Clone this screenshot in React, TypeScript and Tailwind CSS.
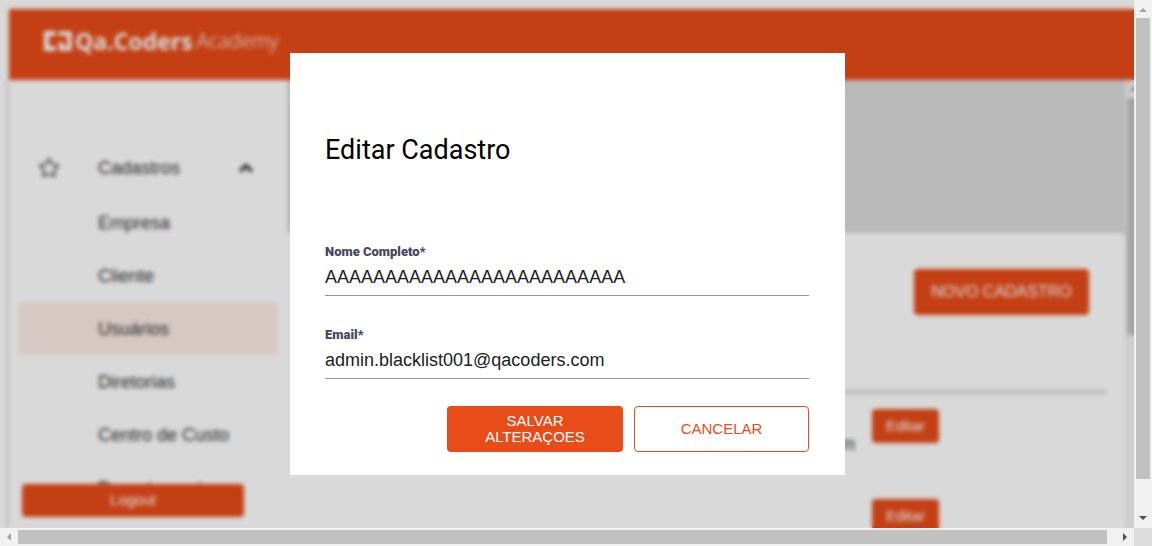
import { ChevronUp, Star } from "lucide-react";

const menuItems = ["Empresa", "Cliente", "Usuários", "Diretorias", "Centro de Custo", "Departamentos"];

const userEmails = ["admin.blacklist001@qacoders.com"];

function Arrow({ points, className }: { points: string; className: string }) {
  return (
    <svg viewBox="0 0 18 18" className={`size-[18px] shrink-0 ${className}`} aria-hidden="true">
      <polygon points={points} fill="currentColor" />
    </svg>
  );
}

function Logo() {
  return (
    <div className="flex items-center text-white">
      <svg viewBox="0 0 30 20" className="mr-0.5 h-5 w-[30px]" fill="none" stroke="currentColor" aria-hidden="true">
        <path d="M12.500 2.500H3.500V17.500H12.500" strokeWidth="5" />
        <path d="M15.500 2.500H26.500V17.500H18V11" strokeWidth="4.500" />
      </svg>
      <span className="font-['Open_Sans'] text-[23px] leading-6 font-bold">Qa.Coders</span>
      <span className="ml-1 font-['Open_Sans'] text-xl leading-6 font-light">Academy</span>
    </div>
  );
}

function Sidebar() {
  return (
    <aside className="relative flex w-[278px] shrink-0 flex-col overflow-hidden bg-white px-[9px] pt-[61px] shadow-[0_0_5px_rgba(0,0,0,0.35)]">
      <button className="flex h-[55px] shrink-0 items-center pb-0.5 pl-5 text-left text-lg text-[#333]">
        <Star className="mr-[38px] size-[22px] text-[#555]" strokeWidth={2} />
        <span className="flex-1">Cadastros</span>
        <ChevronUp className="mr-[22px] size-5" strokeWidth={4} />
      </button>
      <nav className="flex flex-col">
        {menuItems.map((item) => (
          <a
            key={item}
            href="#"
            className={`flex h-[53px] shrink-0 items-center rounded pl-20 text-lg text-[#333] ${item === "Usuários" ? "bg-[#fdebe6]" : ""}`}
          >
            {item}
          </a>
        ))}
      </nav>
      <button className="absolute bottom-[11px] left-[13px] h-[33px] w-[222px] rounded bg-[#e74b18] text-[15px] text-white">
        Logout
      </button>
    </aside>
  );
}

function Content() {
  return (
    <main className="relative flex min-w-0 flex-1 flex-col overflow-hidden bg-[#dadada] pt-[153px]">
      <section className="flex-1 rounded-tr-md bg-white px-[18px] pt-9">
        <div className="flex justify-end pr-[18px]">
          <button className="h-[46px] w-[175px] rounded bg-[#e74b18] text-base text-white">
            NOVO CADASTRO
          </button>
        </div>
        <table className="mt-[76px] w-full border-t-2 border-[#bbb] text-lg text-[#333]">
          <tbody>
            {[...userEmails, ""].map((email, index) => (
              <tr key={index} className="h-[91px] align-top">
                <td className="pt-[37px] pr-[17px] text-right">{email}</td>
                <td className="w-[235px] pt-4">
                  <button className="h-[34px] w-[67px] rounded bg-[#e74b18] text-[15px] text-white">Editar</button>
                </td>
              </tr>
            ))}
          </tbody>
        </table>
      </section>
    </main>
  );
}

function InnerScrollbar() {
  return (
    <div className="flex w-[18px] shrink-0 flex-col items-center bg-[#f1f1f1]">
      <Arrow points="9,6 14,11 4,11" className="text-[#a3a3a3]" />
      <div className="h-[237px] w-[14px] bg-[#c1c1c1]" />
    </div>
  );
}

function Field({ id, label, type, value }: { id: string; label: string; type: string; value: string }) {
  return (
    <div className="flex flex-col">
      <label htmlFor={id} className="font-[Roboto] text-[13px] leading-4 font-black text-[#454860]">
        {label}
      </label>
      <input
        id={id}
        type={type}
        defaultValue={value}
        className="h-9 w-full border-b border-[#949494] text-lg leading-5 text-[#212121] outline-none"
      />
    </div>
  );
}

function EditDialog() {
  return (
    <form
      role="dialog"
      aria-labelledby="dialog-title"
      className="w-[555px] bg-white pt-20 pr-9 pb-[23px] pl-[35px]"
      onSubmit={(event) => event.preventDefault()}
    >
      <h1 id="dialog-title" className="font-[Roboto] text-[27px] leading-[34px] text-black">
        Editar Cadastro
      </h1>
      <div className="mt-[77px] flex flex-col gap-[31px]">
        <Field id="name" label="Nome Completo*" type="text" value="AAAAAAAAAAAAAAAAAAAAAAAAA" />
        <Field id="email" label="Email*" type="email" value="admin.blacklist001@qacoders.com" />
      </div>
      <div className="mt-[27px] flex justify-end gap-[11px]">
        <button type="submit" className="h-[46px] w-44 rounded bg-[#e84c19] px-8 text-[15px] leading-4 text-white">
          SALVAR ALTERAÇOES
        </button>
        <button type="button" className="h-[46px] w-[175px] rounded border border-[#e84c19] text-[15px] leading-4 text-[#e84c19]">
          CANCELAR
        </button>
      </div>
    </form>
  );
}

export default function App() {
  return (
    <div className="grid h-screen grid-cols-[minmax(0,1fr)_18px] grid-rows-[minmax(0,1fr)_18px] font-['Liberation_Sans',Arial,sans-serif]">
      <div className="relative overflow-hidden bg-white">
        <div className="flex h-full flex-col pt-[9px] pl-[9px]">
          <header className="z-10 flex h-[71px] shrink-0 items-start bg-[#e74b18] pt-5 pl-[34px]">
            <Logo />
          </header>
          <div className="-mr-[9px] flex min-h-0 flex-1 justify-end">
            <Sidebar />
            <Content />
            <InnerScrollbar />
          </div>
        </div>
        <div className="absolute inset-0 z-20 flex items-center justify-center bg-black/15 pl-px backdrop-blur-[2px]">
          <EditDialog />
        </div>
      </div>
      <div className="flex flex-col items-center bg-[#f1f1f1]">
        <Arrow points="9,8 13,12 5,12" className="text-[#a3a3a3]" />
        <div className="w-[14px] flex-1 bg-[#c1c1c1]" />
        <div className="h-[31px]" />
        <Arrow points="5,6 13,6 9,10" className="text-[#505050]" />
      </div>
      <div className="flex items-center bg-[#f1f1f1]">
        <Arrow points="11,5 11,13 7,9" className="text-[#a3a3a3]" />
        <div className="h-[14px] flex-1 bg-[#c1c1c1]" />
        <div className="w-[9px]" />
        <Arrow points="7,5 7,13 11,9" className="text-[#505050]" />
      </div>
      <div className="bg-[#dcdcdc]" />
    </div>
  );
}
